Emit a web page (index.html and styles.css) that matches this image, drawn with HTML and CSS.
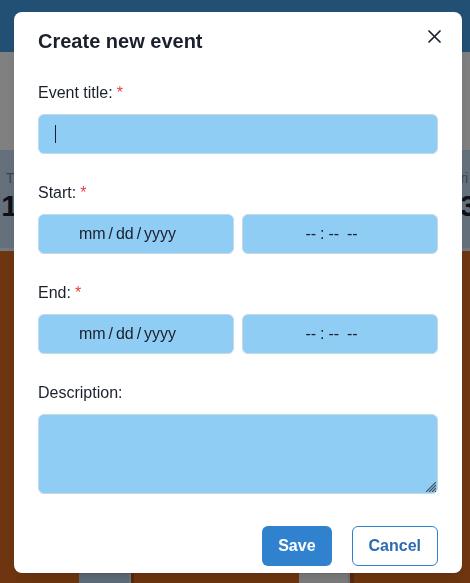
FILE: index.html
```html
<!DOCTYPE html>
<html lang="en">
<head>
<meta charset="utf-8">
<title>Create new event</title>
<link rel="stylesheet" href="styles.css">
</head>
<body>
<div class="app">
  <header class="topbar"></header>
  <div class="toolbar"></div>
  <div class="dayhead">
    <div class="day"><span class="dname">Thu</span><span class="dnum">12</span></div>
    <div class="day"></div>
    <div class="day"><span class="dname">Fri</span><span class="dnum">13</span></div>
  </div>
  <div class="calbody">
    <div class="calrow">
      <div class="cell cell-a"></div>
      <div class="cell cell-slate"></div>
      <div class="cell cell-dark"></div>
      <div class="cell cell-b"></div>
      <div class="cell cell-gray"></div>
      <div class="cell cell-dark2"></div>
      <div class="cell cell-rest"></div>
    </div>
  </div>
</div>

<div class="overlay"></div>

<section class="modal" role="dialog" aria-labelledby="modal-title">
  <h2 class="modal-header" id="modal-title">Create new event</h2>
  <button class="close" type="button" aria-label="Close">
    <svg width="13" height="13" viewBox="0 0 13 13"><path d="M1 1L12 12M12 1L1 12" stroke="#1a202c" stroke-width="1.7" stroke-linecap="round"/></svg>
  </button>
  <div class="modal-body">
    <div class="group">
      <label class="field-label">Event title:<span class="req">*</span></label>
      <div class="control text-control"><span class="caret"></span></div>
    </div>
    <div class="group">
      <label class="field-label">Start:<span class="req">*</span></label>
      <div class="pair">
        <div class="control date">mm / dd / yyyy</div>
        <div class="control time">-- : --  --</div>
      </div>
    </div>
    <div class="group">
      <label class="field-label">End:<span class="req">*</span></label>
      <div class="pair">
        <div class="control date">mm / dd / yyyy</div>
        <div class="control time">-- : --  --</div>
      </div>
    </div>
    <div class="group">
      <label class="field-label" for="desc">Description:</label>
      <div class="textarea-wrap">
        <textarea id="desc" class="textarea"></textarea>
        <svg class="resizer" width="10" height="10" viewBox="0 0 10 10"><path d="M10 0L0 10M10 3L3 10M10 6L6 10M10 9L9 10" stroke="#3f4a56" stroke-width="1.1"/></svg>
      </div>
    </div>
  </div>
  <div class="modal-footer">
    <button class="btn btn-primary" type="button">Save</button>
    <button class="btn btn-outline" type="button">Cancel</button>
  </div>
</section>
</body>
</html>
```

FILE: styles.css
```css
* { box-sizing: border-box; }

html, body {
  margin: 0;
  height: 100%;
}

body {
  font-family: "Liberation Sans", Arial, sans-serif;
  overflow: hidden;
  background: #d4681f;
  color: #1a202c;
}

.app {
  display: flex;
  flex-direction: column;
  height: 583px;
}

.topbar {
  flex: none;
  height: 52px;
  background: #4299e1;
}

.toolbar {
  flex: none;
  height: 98px;
  background: #f6f6f6;
}

.dayhead {
  flex: none;
  height: 101px;
  background: #c0d9f0;
  border-bottom: 3px solid #e2e8f0;
  display: grid;
  grid-template-columns: 36px 388px 72px;
}

.day {
  display: flex;
  flex-direction: column;
  align-items: center;
  padding-top: 18px;
}

.dname {
  font-size: 14px;
  line-height: 20px;
  color: #718096;
}

.dnum {
  font-size: 30px;
  line-height: 36px;
  font-weight: 700;
  color: #1a202c;
}

.calbody {
  flex: 1;
  display: flex;
  flex-direction: column;
  background: #d4681f;
}

.calrow {
  margin-top: auto;
  height: 10px;
  display: flex;
}

.cell { height: 100%; }
.cell-a { width: 79px; }
.cell-slate { width: 52px; background: #b7d2eb; border-right: 2px solid #d7e3ee; border-top: 1px solid #a7bfd6; }
.cell-dark { width: 3px; background: #ad511b; }
.cell-b { width: 165px; }
.cell-gray { width: 51px; background: #f0f0f0; border-right: 2px solid #dadada; border-top: 1px solid #dcdcdc; }
.cell-dark2 { width: 4px; background: #ad511b; }
.cell-rest { flex: 1; }

.overlay {
  position: fixed;
  inset: 0;
  background: rgba(0, 0, 0, 0.48);
}

.modal {
  position: fixed;
  left: 14px;
  top: 12px;
  width: 448px;
  background: #fff;
  border-radius: 8px;
  box-shadow: 0 10px 15px -3px rgba(0, 0, 0, 0.1), 0 4px 6px -2px rgba(0, 0, 0, 0.05);
  color: #1a202c;
}

.modal-header {
  margin: 0;
  padding: 14px 24px 16px;
  font-size: 20px;
  line-height: 30px;
  font-weight: 700;
}

.close {
  position: absolute;
  top: 8px;
  right: 12px;
  width: 32px;
  height: 32px;
  padding: 0;
  border: 0;
  border-radius: 6px;
  background: transparent;
  display: flex;
  align-items: center;
  justify-content: center;
}

.modal-body {
  padding: 7px 24px 0;
  display: flex;
  flex-direction: column;
  gap: 25px;
}

.field-label {
  display: block;
  font-size: 16px;
  line-height: 24px;
  padding-top: 2px;
  margin-bottom: 9px;
}

.req {
  color: #e53e3e;
  margin-left: 4px;
}

.control {
  height: 40px;
  background: #90cdf4;
  border: 1px solid #c3d9eb;
  border-radius: 6px;
  font-size: 16px;
  color: #1a202c;
  display: flex;
  align-items: center;
}

.text-control {
  padding-left: 16px;
}

.caret {
  width: 1px;
  height: 18px;
  background: #1a202c;
}

.pair {
  display: grid;
  grid-template-columns: 1fr 1fr;
  gap: 8px;
}

.date,
.time {
  justify-content: center;
  padding-right: 17px;
  white-space: pre;
}

.date { word-spacing: -1.5px; }
.time { word-spacing: -0.5px; }

.textarea-wrap {
  position: relative;
}

.textarea {
  display: block;
  width: 100%;
  height: 80px;
  margin: 0;
  padding: 8px 16px;
  background: #90cdf4;
  border: 1px solid #c3d9eb;
  border-radius: 6px;
  resize: none;
  font: inherit;
  font-size: 16px;
  color: #1a202c;
}

.resizer {
  position: absolute;
  right: 2px;
  bottom: 2px;
}

.modal-footer {
  display: flex;
  justify-content: flex-end;
  gap: 20px;
  padding: 32px 24px 7px;
}

.btn {
  height: 40px;
  padding: 0 16px;
  border-radius: 6px;
  font-family: "Liberation Sans", Arial, sans-serif;
  font-size: 16px;
  font-weight: 700;
  line-height: 1.2;
}

.btn-primary {
  background: #3182ce;
  color: #fff;
  border: 0;
}

.btn-outline {
  background: #fff;
  color: #2b6cb0;
  border: 1px solid #3182ce;
}
```
